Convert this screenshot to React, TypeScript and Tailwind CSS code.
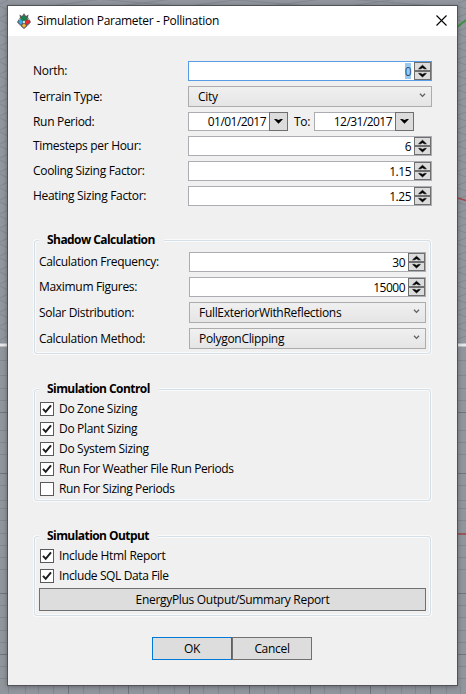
import React from 'react';

const DARK = '#6f6f6f';

function Spin() {
  return (
    <svg width="17" height="18" viewBox="0 0 17 18" className="shrink-0" shapeRendering="crispEdges">
      <rect width="17" height="18" fill={DARK} />
      <rect x="1" y="1" width="15" height="7" fill="#dcdcdc" />
      <rect x="1" y="10" width="15" height="7" fill="#dcdcdc" />
      <path shapeRendering="auto" d="M4.6 6.8 L8.5 3.2 L12.4 6.8 L10.4 6.8 L8.5 5.8 L6.6 6.8Z M4.6 11.4 L8.5 15 L12.4 11.4 L10.4 11.4 L8.5 12.4 L6.6 11.4Z" fill="#000" stroke="#000" strokeWidth=".6" />
    </svg>
  );
}

function NumberField({ value, focused }: { value: string; focused?: boolean }) {
  return (
    <div className={`flex h-5 flex-1 items-center justify-end border bg-white ${focused ? 'border-[#569de5]' : 'border-[#abadb3]'}`}>
      <span className={`mr-[3px] h-[16px] leading-[17px] tracking-[-0.5px] ${focused ? 'bg-[#99c9ef] text-[#24527a]' : ''}`}>{value}</span>
      <Spin />
    </div>
  );
}

function Select({ value }: { value: string }) {
  return (
    <div className="flex h-[21px] flex-1 items-center justify-between border border-[#acacac] bg-linear-to-b from-[#f0f0f0] to-[#e5e5e5] pl-[9px] pr-[5px]">
      <span className="leading-[19px]">{value}</span>
      <svg width="7" height="5" viewBox="0 0 7 5" className="-mt-[3px]">
        <path d="M1 .7 L3.5 3.4 L6 .7" fill="none" stroke="#606060" strokeWidth="1.3" />
      </svg>
    </div>
  );
}

function DateField({ value }: { value: string }) {
  return (
    <div className="flex h-[19px] w-[100px] justify-end border border-[#abadb3] bg-white">
      <span className="mr-[3px] leading-[17px] tracking-[-0.55px]">{value}</span>
      <div className="-my-px -mr-px flex w-[19px] items-center justify-center border border-[#6f6f6f] bg-[#dcdcdc]">
        <svg width="9" height="5" viewBox="0 0 9 5"><path d="M0 0 H2.2 L4.5 1 L6.8 0 H9 L4.5 4.7Z" fill="#000" /></svg>
      </div>
    </div>
  );
}

function Row({ label, children, inner, tall }: { label: string; children: React.ReactNode; inner?: boolean; tall?: boolean }) {
  return (
    <div className="flex items-start">
      <span className={`shrink-0 whitespace-nowrap ${inner ? 'w-[150px]' : 'w-[155px]'} ${tall ? 'leading-[21px]' : 'leading-[20px]'}`}>{label}</span>
      {children}
    </div>
  );
}

function Group({ title, className, children }: { title: string; className: string; children: React.ReactNode }) {
  return (
    <section className={`mx-px rounded-[3px] border border-[#d5dfe8] px-[4px] shadow-[0_0_0_1px_#fafafa,inset_0_0_0_1px_#fafafa] ${className}`}>
      <h2 className="-mt-[9px] h-[18px] w-fit bg-[#f0f0f0] pl-[8px] pr-[9px] font-bold leading-[16px] tracking-[-0.56px]">{title}</h2>
      {children}
    </section>
  );
}

function Check({ label, checked, tight }: { label: string; checked?: boolean; tight?: boolean }) {
  return (
    <label className="flex h-5 items-center">
      <svg width="14" height="14" viewBox="0 0 14 14" className="mr-[5px]">
        <rect x=".5" y=".5" width="13" height="13" fill="#fff" stroke="#5a5a5a" />
        {checked && <path d="M3 6.8 L5.7 9.8 L11 3.4" fill="none" stroke="#1c1c1c" strokeWidth="2" />}
      </svg>
      <span className={`whitespace-nowrap leading-[18px] ${tight ? 'tracking-[-0.39px]' : ''}`}>{label}</span>
    </label>
  );
}

function Logo() {
  return (
    <svg width="14" height="16" viewBox="0 0 14 16">
      <path d="M2.5 1.5 L5 3 L7 .3 L9 3 L11.5 1.5 L11 4.5 L14 9 L11 12.5 L7 16 L3 12.5 L0 9 L3 4.5Z" fill="#595b58" />
      <path d="M1.2 8.8 L3.5 6 L6 8.8 L4 12Z" fill="#35a9e8" />
      <path d="M12.8 8.8 L10.5 6 L8 8.8 L10 12Z" fill="#ed2632" />
      <circle cx="7" cy="5.7" r="2.6" fill="#15814d" />
      <path d="M4.8 12.5 L7 10.5 L9.2 12.5 L7 14.8Z" fill="#f4b63c" />
      <path d="M7 7.5 L8.2 9 L7 10.5 L5.8 9Z" fill="#fff" />
      <path d="M3.4 5.4 L2 7 M10.6 5.4 L12 7 M2 11.4 L3.5 13 M12 11.4 L10.5 13" stroke="#e1d6c7" strokeWidth=".8" />
    </svg>
  );
}

const slantRows = Array.from({ length: 25 }, (_, i) => i * 14);
const flatRows = [360, 375, 388, 400, 412, 430, 442, 454, 473, 485, 500, 508, 520, 533, 545, 557, 569, 593, 605, 617, 630, 642, 654, 666, 678];
const columns = [8, 25, 38, 53, 83, 99, 113, 143, 158, 174, 203, 218, 234, 264, 278, 294, 324, 340, 355, 385, 401, 415, 446, 460];

function Viewport() {
  return (
    <svg className="absolute inset-0" width="466" height="694" viewBox="0 0 466 694" fill="none">
      <rect width="466" height="694" fill="#92979f" />
      {slantRows.map((y) => (
        <path key={y} d={`M0 ${y + 4} L8 ${y} M0 ${y + 6} L8 ${y + 10} M458 ${y + 3} L466 ${y} M458 ${y + 6} L466 ${y + 9}`} stroke="#7f858d" strokeWidth=".8" />
      ))}
      <path d="M50 6 L170 -10 M120 6 L240 -10 M190 6 L310 -10 M270 6 L390 -10 M350 6 L460 -10 M60 -4 L190 7 M190 -4 L320 7 M310 -4 L460 8" stroke="#7f858d" strokeWidth=".8" />
      <path d="M456 28 L466 20" stroke="#3e9343" strokeWidth="2" />
      <path d="M456 197.5 L466 200.5" stroke="#a64850" strokeWidth="1.5" />
      <rect y="347" width="466" height="347" fill="#91969d" />
      {flatRows.map((y) => <path key={y} d={`M0 ${y + 0.5} H466`} stroke="#828890" />)}
      <path d="M0 412.5 H466 M0 473.5 H466 M0 593.5 H466 M0 654.5 H466" stroke="#6f757d" />
      {columns.map((x) => <path key={x} d={`M${x + 0.5} 686 V694`} stroke="#828890" />)}
      <path d="M68.5 686 V694 M128.5 686 V694 M189.5 686 V694 M249.5 686 V694 M310.5 686 V694 M370.5 686 V694 M430.5 686 V694" stroke="#6f757d" />
      <path d="M0 345 H466" stroke="#e6e8eb" strokeWidth="3" />
      <path d="M456 534 H466" stroke="#a2444b" strokeWidth="1.5" />
    </svg>
  );
}

export default function App() {
  return (
    <div className="relative h-[694px] w-[466px] overflow-hidden pl-[7px] pt-[5px] font-['Open_Sans','Noto_Sans',sans-serif] text-[12px] tracking-[-0.31px] text-black">
      <Viewport />
      <main className="relative flex h-[681px] w-[451px] flex-col border border-[#505257] bg-[#f0f0f0] shadow-[0_1px_5px_rgba(0,0,0,0.3)]">
        <header className="flex h-[30px] shrink-0 items-center bg-white pl-[9px] pr-[10px]">
          <Logo />
          <h1 className="ml-[6px] flex-1 leading-[20px] tracking-[-0.28px]">Simulation Parameter - Pollination</h1>
          <svg width="11" height="11" viewBox="0 0 11 11" className="-mt-[2px]"><path d="M.5 .5 L10.5 10.5 M10.5 .5 L.5 10.5" stroke="#000" strokeWidth="1.1" /></svg>
        </header>
        <div className="flex flex-col pl-[25px] pr-[25px] pt-[25px]">
          <div className="flex flex-col gap-[5px]">
            <Row label="North:"><NumberField value="0" focused /></Row>
            <Row label="Terrain Type:" tall><Select value="City" /></Row>
            <div className="-mb-px">
              <Row label="Run Period:">
                <DateField value="01/01/2017" />
                <span className="w-[26px] pl-[6px] leading-[20px]">To:</span>
                <DateField value="12/31/2017" />
              </Row>
            </div>
            <Row label="Timesteps per Hour:"><NumberField value="6" /></Row>
            <Row label="Cooling Sizing Factor:"><NumberField value="1.15" /></Row>
            <Row label="Heating Sizing Factor:"><NumberField value="1.25" /></Row>
          </div>
          <Group title="Shadow Calculation" className="mt-[34px] h-[114px]">
            <div className="mt-[2px] flex flex-col gap-[5px]">
              <Row label="Calculation Frequency:" inner><NumberField value="30" /></Row>
              <Row label="Maximum Figures:" inner><NumberField value="15000" /></Row>
              <Row label="Solar Distribution:" inner tall><Select value="FullExteriorWithReflections" /></Row>
              <Row label="Calculation Method:" inner tall><Select value="PolygonClipping" /></Row>
            </div>
          </Group>
          <Group title="Simulation Control" className="mt-[35px] h-[112px]">
            <div className="pl-px">
              <Check label="Do Zone Sizing" checked />
              <Check label="Do Plant Sizing" checked />
              <Check label="Do System Sizing" checked />
              <Check label="Run For Weather File Run Periods" checked tight />
              <Check label="Run For Sizing Periods" tight />
            </div>
          </Group>
          <Group title="Simulation Output" className="mt-[35px] h-[80px]">
            <div className="pl-px">
              <Check label="Include Html Report" checked />
              <Check label="Include SQL Data File" checked tight />
            </div>
            <button className="mt-[2px] block h-[23px] w-full border border-[#707070] bg-[#dddddd] leading-[21px] tracking-[-0.31px]">EnergyPlus Output/Summary Report</button>
          </Group>
          <div className="mt-[21px] flex pl-[119px]">
            <button className="h-[23px] w-20 border border-[#0078d7] bg-[#dddddd] leading-[21px]">OK</button>
            <button className="h-[23px] w-20 border border-[#707070] bg-[#dddddd] leading-[21px]">Cancel</button>
          </div>
        </div>
      </main>
    </div>
  );
}
